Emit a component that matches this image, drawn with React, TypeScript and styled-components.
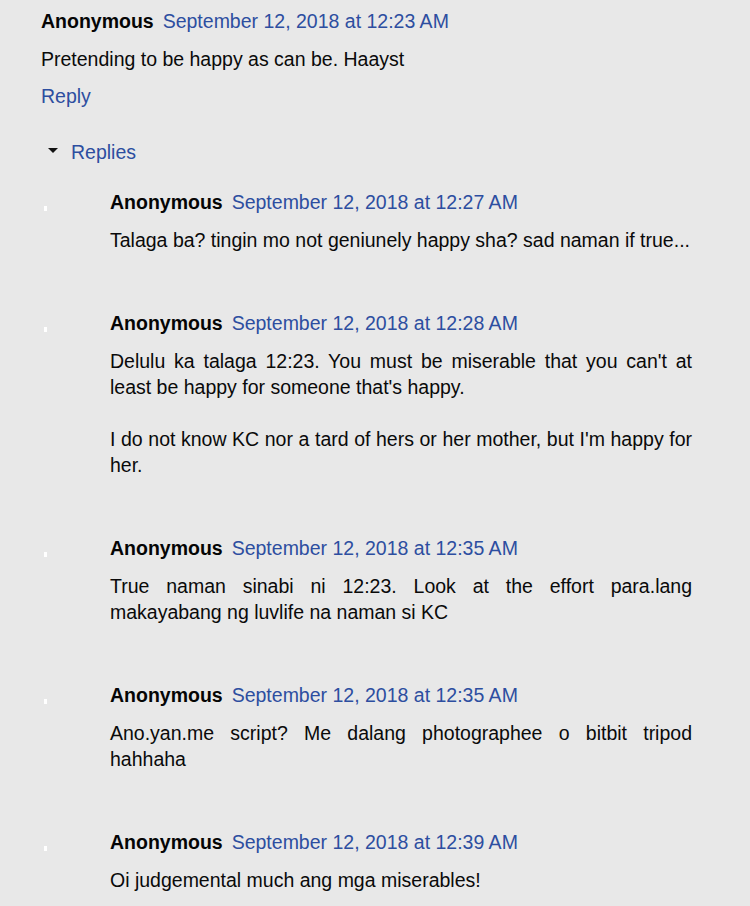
import React from 'react'
import styled, { createGlobalStyle } from 'styled-components'

const GlobalStyle = createGlobalStyle`
  html, body {
    margin: 0;
    padding: 0;
    background: #e8e8e8;
  }
`

interface ReplyData {
  date: string,
  paragraphs: string[],
}

const replies: ReplyData[] = [
  {
    date: 'September 12, 2018 at 12:27 AM',
    paragraphs: ['Talaga ba? tingin mo not geniunely happy sha? sad naman if true...'],
  },
  {
    date: 'September 12, 2018 at 12:28 AM',
    paragraphs: [
      "Delulu ka talaga 12:23. You must be miserable that you can't at least be happy for someone that's happy.",
      "I do not know KC nor a tard of hers or her mother, but I'm happy for her.",
    ],
  },
  {
    date: 'September 12, 2018 at 12:35 AM',
    paragraphs: ['True naman sinabi ni 12:23. Look at the effort para.lang makayabang ng luvlife na naman si KC'],
  },
  {
    date: 'September 12, 2018 at 12:35 AM',
    paragraphs: ['Ano.yan.me script? Me dalang photographee o bitbit tripod hahhaha'],
  },
  {
    date: 'September 12, 2018 at 12:39 AM',
    paragraphs: ['Oi judgemental much ang mga miserables!'],
  },
]

const Header = ({ date }: { date: string }) => (
  <S.Header>
    <S.Author>Anonymous</S.Author>
    <S.DateLink>{date}</S.DateLink>
  </S.Header>
)

export default function App() {
  return (
    <>
      <GlobalStyle />
      <S.Page>
        <S.Comment>
          <Header date="September 12, 2018 at 12:23 AM" />
          <S.Body>Pretending to be happy as can be. Haayst</S.Body>
          <S.ActionLink>Reply</S.ActionLink>
        </S.Comment>

        <S.Toggle>
          <S.Caret />
          <S.ToggleText>Replies</S.ToggleText>
        </S.Toggle>

        <S.ReplyList>
          {replies.map((r, i) => (
            <S.ReplyRow key={i}>
              <S.AvatarCell>
                <S.BrokenAvatar />
              </S.AvatarCell>
              <div>
                <Header date={r.date} />
                <S.Body>
                  {r.paragraphs.map((p, j) => (
                    <S.Para key={j}>{p}</S.Para>
                  ))}
                </S.Body>
              </div>
            </S.ReplyRow>
          ))}
        </S.ReplyList>
      </S.Page>
    </>
  )
}

const S = {
  Page: styled.div`
    width: 651px;
    padding: 8px 0 0 41px;
    font-family: "Liberation Sans", Arial, sans-serif;
    font-size: 19.5px;
    line-height: 26px;
    color: #0a0a0a;
  `,
  Comment: styled.div`
    display: flex;
    flex-direction: column;
  `,
  Header: styled.div`
    display: flex;
    gap: 9px;
    white-space: nowrap;
    margin-bottom: 12px;
  `,
  Author: styled.span`
    font-weight: 700;
    color: #050505;
  `,
  DateLink: styled.a`
    color: #2d4ea0;
    text-decoration: none;
    cursor: pointer;
  `,
  Body: styled.div`
    text-align: justify;
    color: #0a0a0a;
  `,
  Para: styled.p`
    margin: 0;
    & + & {
      margin-top: 26px;
    }
  `,
  ActionLink: styled.a`
    margin-top: 11px;
    color: #2d4ea0;
    cursor: pointer;
  `,
  Toggle: styled.div`
    display: flex;
    align-items: center;
    margin-top: 30px;
    padding-left: 7px;
    cursor: pointer;
  `,
  Caret: styled.span`
    width: 0;
    height: 0;
    border-left: 5px solid transparent;
    border-right: 5px solid transparent;
    border-top: 5px solid #111;
    margin-right: 13px;
    margin-top: -4px;
  `,
  ToggleText: styled.span`
    color: #2d4ea0;
  `,
  ReplyList: styled.div`
    display: flex;
    flex-direction: column;
    gap: 57px;
    margin-top: 24px;
    width: 651px;
  `,
  ReplyRow: styled.div`
    display: grid;
    grid-template-columns: 69px 1fr;
  `,
  AvatarCell: styled.div`
    position: relative;
  `,
  BrokenAvatar: styled.span`
    display: block;
    width: 3px;
    height: 5px;
    margin: 17px 0 0 3px;
    background: #fff;
  `,
}
